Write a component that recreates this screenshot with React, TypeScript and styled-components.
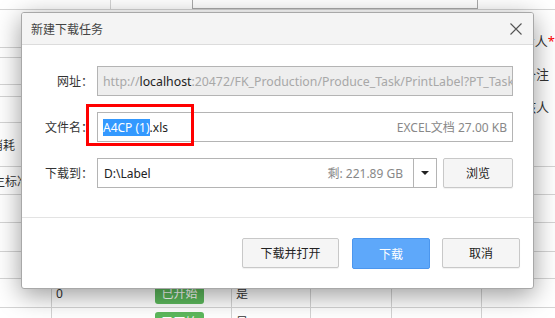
import styled, { createGlobalStyle } from "styled-components";

const GlobalStyle = createGlobalStyle`
  html, body {
    margin: 0;
    padding: 0;
    background: #ffffff;
  }
  body {
    font-family: "Noto Sans", "Noto Sans CJK SC", sans-serif;
    font-size: 12px;
    color: #333333;
  }
`;

const Page = styled.div`
  position: relative;
  width: 555px;
  height: 318px;
  overflow: hidden;
  background: #ffffff;
`;

// ---- background page (mostly hidden behind the dialog) ----
const TopRow = styled.div`
  height: 10px;
  box-sizing: border-box;
  border-bottom: 1px solid #d4d4d4;
  display: flex;
  align-items: flex-end;
  overflow: hidden;
`;

const TopCell = styled.div<{ w: number; line?: boolean }>`
  width: ${(p) => p.w}px;
  height: 30px;
  flex: none;
  display: flex;
  align-items: center;
  justify-content: flex-end;
  padding-right: 6px;
  box-sizing: border-box;
  border-right: ${(p) => (p.line ? "1px solid #d4d4d4" : "none")};
  color: #333;
  white-space: nowrap;
`;

const TopInput = styled.div`
  width: 286px;
  height: 30px;
  flex: none;
  box-sizing: border-box;
  border: 1px solid #aaaaaa;
  padding: 0 6px;
  display: flex;
  align-items: center;
  color: #222;
`;

const Middle = styled.div`
  height: 113px;
  display: flex;
`;

const LeftTable = styled.div`
  width: 60px;
  display: flex;
  flex-direction: column;
`;

const LeftRow = styled.div<{ h: number }>`
  height: ${(p) => p.h}px;
  box-sizing: border-box;
  border-bottom: 1px solid #d4d4d4;
`;

const RightForm = styled.div`
  margin-left: auto;
  width: 90px;
  padding-top: 14px;
  display: flex;
  flex-direction: column;
`;

const FormLabel = styled.div`
  height: 39px;
  padding-right: 6px;
  display: flex;
  justify-content: flex-end;
  align-items: center;
  color: #333;
  font-size: 13px;
  white-space: nowrap;
  span {
    color: #ff0000;
    margin-right: -6px;
  }
`;

const Row = styled.div<{ h: number }>`
  height: ${(p) => p.h}px;
  box-sizing: border-box;
  border-bottom: 1px solid #d4d4d4;
  display: flex;
`;

const SideText = styled.div<{ shift: number }>`
  width: 120px;
  flex: none;
  margin-left: ${(p) => p.shift}px;
  display: flex;
  align-items: center;
  font-size: 12px;
  color: #333;
  white-space: nowrap;
`;

const Cell = styled.div<{ w: number; line?: boolean }>`
  width: ${(p) => p.w}px;
  flex: none;
  box-sizing: border-box;
  border-right: ${(p) => (p.line ? "1px solid #d4d4d4" : "none")};
  display: flex;
  align-items: center;
  padding-left: 4px;
  color: #333;
`;

const Badge = styled.span`
  display: inline-flex;
  align-items: center;
  justify-content: center;
  width: 49px;
  height: 21px;
  background: #5cb85c;
  border-radius: 3px;
  color: #ffffff;
  margin-left: -1px;
`;

// ---- dialog ----
const Dialog = styled.div`
  position: absolute;
  left: 21px;
  top: 12px;
  width: 513px;
  height: 277px;
  box-sizing: border-box;
  border: 1px solid #a8a8a8;
  border-radius: 3px;
  background: #ffffff;
  box-shadow: 0 6px 26px rgba(0, 0, 0, 0.4);
  display: flex;
  flex-direction: column;
  overflow: hidden;
`;

const TitleBar = styled.div`
  height: 32px;
  box-sizing: border-box;
  background: #f4f4f4;
  border-bottom: 1px solid #dcdcdc;
  display: flex;
  align-items: center;
  justify-content: space-between;
  padding: 0 10px 0 9px;
  color: #444444;
  font-size: 12px;
`;

const Close = styled.div`
  width: 14px;
  height: 14px;
  display: flex;
  align-items: center;
  justify-content: center;
`;

const Body = styled.div`
  box-sizing: border-box;
  height: 173px;
  border-bottom: 1px solid #e3e3e3;
  padding: 21px 20px 0 0;
  display: flex;
  flex-direction: column;
  gap: 16px;
`;

const Field = styled.div`
  position: relative;
  height: 30px;
  display: flex;
  align-items: center;
`;

const Label = styled.div`
  width: 71px;
  margin-right: 4px;
  text-align: right;
  color: #333333;
  flex: none;
`;

const Box = styled.div<{ disabled?: boolean }>`
  flex: 1;
  height: 30px;
  box-sizing: border-box;
  border: 1px solid #b4b4b4;
  background: ${(p) => (p.disabled ? "#eeeeee" : "#ffffff")};
  display: flex;
  align-items: center;
  justify-content: space-between;
  padding: 0 5px;
  white-space: nowrap;
  overflow: hidden;
  color: #222;
  font-size: ${(p) => (p.disabled ? "12.3px" : "12px")};
`;

const Muted = styled.span`
  color: #a8a8a8;
`;

const Info = styled.span`
  color: #888888;
`;

const Selected = styled.span`
  background: #3399ff;
  color: #ffffff;
  line-height: 16px;
`;

const Highlight = styled.div`
  position: absolute;
  left: 64px;
  top: -8px;
  width: 108px;
  height: 42px;
  box-sizing: border-box;
  border: 3px solid #ff0000;
  pointer-events: none;
`;

const PathBox = styled.div`
  flex: 1;
  height: 30px;
  box-sizing: border-box;
  border: 1px solid #b4b4b4;
  display: flex;
`;

const PathText = styled.div`
  flex: 1;
  display: flex;
  align-items: center;
  justify-content: space-between;
  padding: 0 10px 0 6px;
  color: #222;
`;

const Drop = styled.div`
  width: 22px;
  border-left: 1px solid #b4b4b4;
  display: flex;
  align-items: center;
  justify-content: center;
`;

const Arrow = styled.div`
  width: 0;
  height: 0;
  border-left: 4px solid transparent;
  border-right: 4px solid transparent;
  border-top: 4px solid #222;
`;

const Button = styled.button<{ w: number; primary?: boolean }>`
  width: ${(p) => p.w}px;
  height: ${(p) => (p.primary ? 31 : 30)}px;
  box-sizing: border-box;
  border: 1px solid ${(p) => (p.primary ? "#4b96ee" : "#c8c8c8")};
  border-radius: 2px;
  background: ${(p) => (p.primary ? "#5ea8fa" : "#f5f5f5")};
  color: ${(p) => (p.primary ? "#ffffff" : "#222222")};
  font-family: inherit;
  font-size: 12px;
  padding: 0;
  flex: none;
  box-shadow: ${(p) => (p.primary ? "none" : "0 1px 1px rgba(0,0,0,0.06)")};
`;

const Browse = styled(Button)`
  margin-left: 6px;
`;

const Footer = styled.div`
  flex: 1;
  display: flex;
  justify-content: flex-end;
  align-items: flex-start;
  padding: 20px 13px 0 0;
  gap: 12px;
  button:first-child {
    margin-right: 1px;
  }
`;

export default function App() {
  return (
    <>
      <GlobalStyle />
      <Page>
        <TopRow>
          <TopCell w={111} line />
          <TopCell w={81}>制单编号</TopCell>
          <TopInput>PN000-002</TopInput>
          <TopCell w={58}>生产编号</TopCell>
        </TopRow>
        <Middle>
          <LeftTable>
            <LeftRow h={38} />
            <LeftRow h={10} />
            <LeftRow h={27} />
            <LeftRow h={12} />
            <LeftRow h={26} />
          </LeftTable>
          <RightForm>
            <FormLabel>
              负责人<span>*</span>
            </FormLabel>
            <FormLabel>备注</FormLabel>
            <FormLabel>审核人</FormLabel>
          </RightForm>
        </Middle>
        <Row h={44}>
          <SideText shift={-9}>消耗</SideText>
        </Row>
        <Row h={28}>
          <SideText shift={-7}>生标准</SideText>
        </Row>
        <Row h={28} />
        <Row h={29} />
        <Row h={27} />
        <Row h={29}>
          <Cell w={52} line />
          <Cell w={100}>0</Cell>
          <Cell w={80} line>
            <Badge>已开始</Badge>
          </Cell>
          <Cell w={79} line>是</Cell>
          <Cell w={81} line />
          <Cell w={90} line />
        </Row>
        <Row h={29}>
          <Cell w={52} line />
          <Cell w={100}>1</Cell>
          <Cell w={80} line>
            <Badge>已开始</Badge>
          </Cell>
          <Cell w={79} line>是</Cell>
          <Cell w={81} line />
          <Cell w={90} line />
        </Row>

        <Dialog>
          <TitleBar>
            <span>新建下载任务</span>
            <Close>
              <svg width="12" height="12" viewBox="0 0 12 12">
                <path d="M0.5 0.5 L11.5 11.5 M11.5 0.5 L0.5 11.5" stroke="#555" strokeWidth="1.1" fill="none" />
              </svg>
            </Close>
          </TitleBar>
          <Body>
            <Field>
              <Label>网址：</Label>
              <Box disabled>
                <span>
                  <Muted>http://</Muted>localhost
                  <Muted>:20472/FK_Production/Produce_Task/PrintLabel?PT_TaskId=1024</Muted>
                </span>
              </Box>
            </Field>
            <Field>
              <Label>文件名：</Label>
              <Box>
                <span>
                  <Selected>A4CP (1)</Selected>.xls
                </span>
                <Info>EXCEL文档 27.00 KB</Info>
              </Box>
              <Highlight />
            </Field>
            <Field>
              <Label>下载到：</Label>
              <PathBox>
                <PathText>
                  <span>D:\Label</span>
                  <Info>剩: 221.89 GB</Info>
                </PathText>
                <Drop>
                  <Arrow />
                </Drop>
              </PathBox>
              <Browse w={70}>浏览</Browse>
            </Field>
          </Body>
          <Footer>
            <Button w={97}>下载并打开</Button>
            <Button w={78} primary>
              下载
            </Button>
            <Button w={78}>取消</Button>
          </Footer>
        </Dialog>
      </Page>
    </>
  );
}
